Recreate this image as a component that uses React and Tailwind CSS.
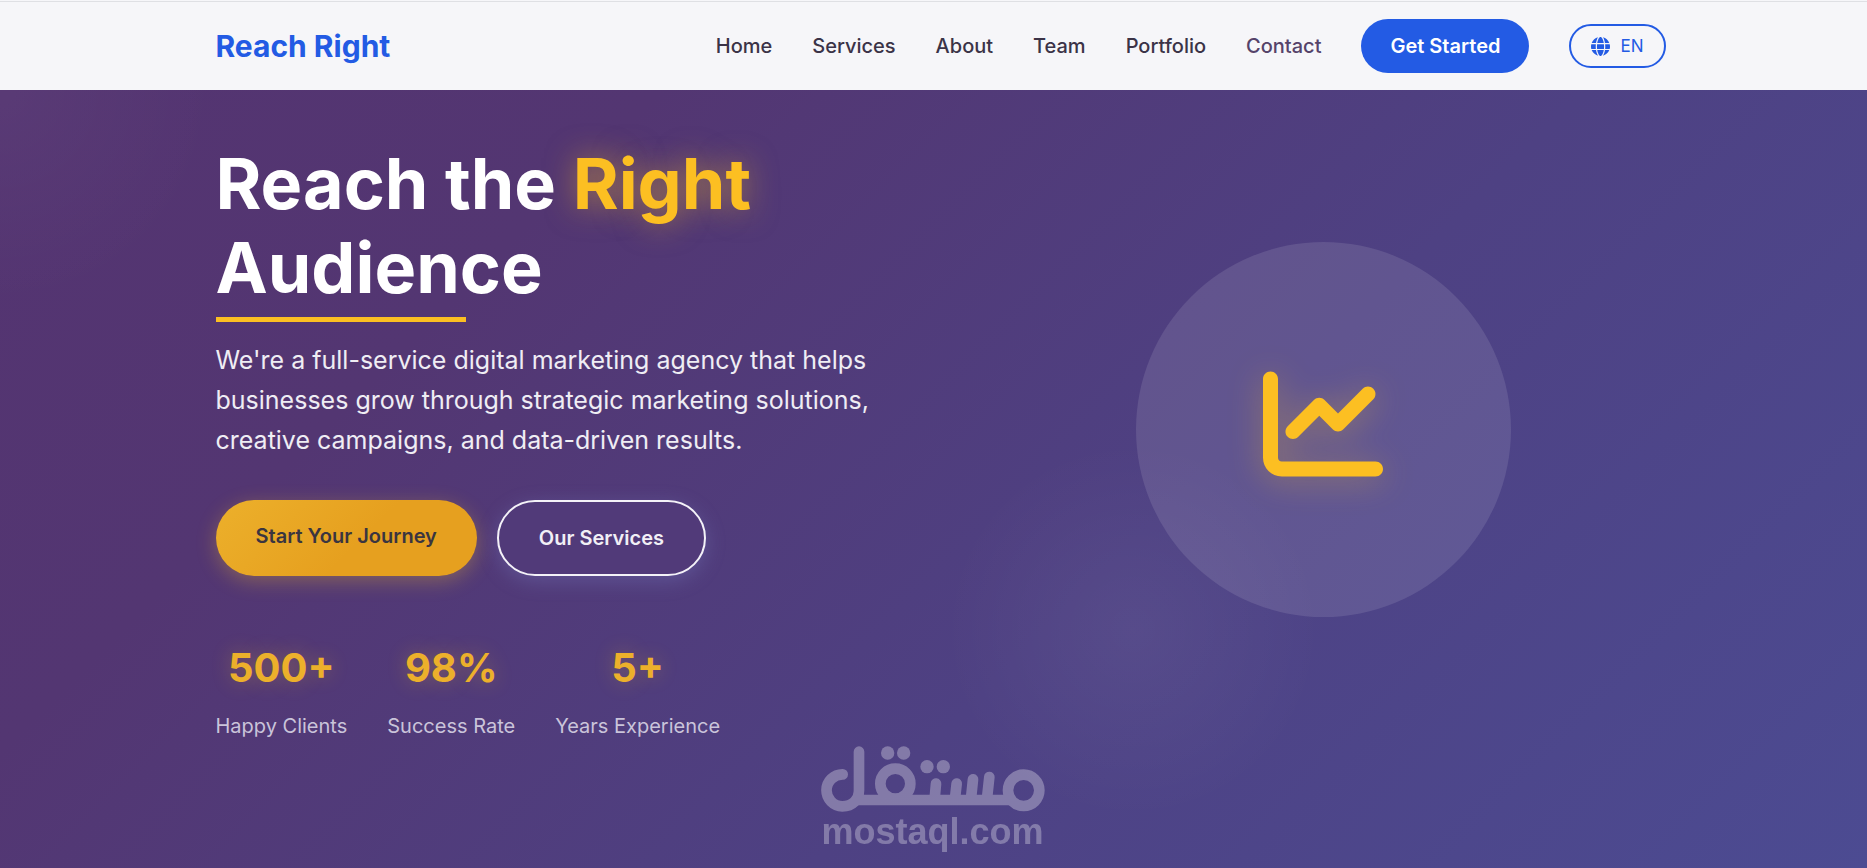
import { FaChartLine, FaGlobe } from 'react-icons/fa6';

const links = ['Home', 'Services', 'About', 'Team', 'Portfolio'];

const stats = [
  { value: '500+', label: 'Happy Clients' },
  { value: '98%', label: 'Success Rate' },
  { value: '5+', label: 'Years Experience' },
];

function Navbar() {
  return (
    <header className="h-[90px] shrink-0 bg-[#f6f6f9] pt-px flex flex-col">
      <div className="h-px shrink-0 bg-[#dfe0e4]" />
      <div className="grow pl-[14px]">
        <div className="h-full max-w-[1500px] mx-auto px-[25px] flex items-center justify-between">
          <a href="#home" className="text-[30px] leading-[36px] font-bold text-[#235be4]">
            Reach Right
          </a>
          <nav className="flex items-center gap-10 text-[20px] leading-[32px] font-medium text-[#3b3347]">
            {links.map((link) => (
              <a key={link} href={`#${link.toLowerCase()}`}>
                {link}
              </a>
            ))}
            <a href="#contact" className="text-[#55436a]">
              Contact
            </a>
            <a
              href="#start"
              className="bg-[#235be4] text-white font-semibold rounded-full px-[29px] py-[11px]"
            >
              Get Started
            </a>
            <button
              type="button"
              className="flex items-center gap-[10px] h-11 border-2 border-[#235be4] rounded-full px-5 text-[17px] font-normal text-[#235be4]"
            >
              <FaGlobe className="size-[19px]" />
              EN
            </button>
          </nav>
        </div>
      </div>
    </header>
  );
}

function Watermark() {
  return (
    <div className="absolute bottom-4 inset-x-0 pr-[2px] flex flex-col items-center text-white opacity-30">
      <svg
        viewBox="93 54 672 198"
        className="w-[224px] h-[66px]"
        fill="none"
        stroke="currentColor"
        strokeWidth="32"
        strokeLinecap="round"
      >
        <path d="M158 139 A48 48 0 1 0 157 235 C188 235 207 214 207 187 V71" />
        <path d="M190 216 H665" strokeLinecap="butt" />
        <circle cx="316" cy="167" r="45" />
        <circle cx="701" cy="187" r="47" />
        <path d="M434 212 L438 167 M495 212 L500 167 M543 212 L549 154 M591 212 L598 147" />
        <g fill="currentColor" stroke="none">
          <circle cx="293" cy="75" r="20" />
          <circle cx="341" cy="75" r="20" />
          <circle cx="411" cy="116" r="20" />
          <circle cx="460" cy="116" r="20" />
        </g>
      </svg>
      <span className="text-[36px] leading-[40px] font-bold font-['Liberation_Sans',sans-serif]">
        mostaql.com
      </span>
    </div>
  );
}

function Hero() {
  return (
    <main className="relative grow overflow-hidden pl-[14px] bg-[radial-gradient(circle_at_1133px_540px,rgba(255,255,255,0.05),transparent_190px),radial-gradient(circle_at_0px_0px,rgba(255,255,255,0.03),transparent_220px),linear-gradient(135deg,#543471_0%,#533672_25%,#4e4183_60%,#4c4b92_100%)]">
      <div className="max-w-[1500px] mx-auto px-[25px] pt-[52px] grid grid-cols-2 gap-20">
        <div>
          <h1 className="text-[70px] leading-[84px] font-bold text-white">
            Reach the{' '}
            <span className="text-[#fcbf22] [text-shadow:0_0_30px_rgba(251,191,36,0.5)]">Right</span>
            <br />
            Audience
          </h1>
          <div className="mt-[7px] w-[250px] h-[5px] bg-[#fcbf22]" />
          <p className="mt-[18px] text-[25px] leading-[40px] text-[#efedf4]">
            We're a full-service digital marketing agency that helps businesses grow through
            strategic marketing solutions, creative campaigns, and data-driven results.
          </p>
          <div className="mt-10 flex gap-5 text-[20px] leading-[32px] font-semibold">
            <a
              href="#start"
              className="rounded-full px-10 py-5 text-[#3a3540] bg-[linear-gradient(135deg,#ecb02b,#e6a01f_55%)] shadow-[0_5px_20px_rgba(251,191,36,0.3)]"
            >
              Start Your Journey
            </a>
            <a
              href="#services"
              className="rounded-full px-10 py-5 border-2 border-[#f4f2f8] text-[#f1eff6] bg-[#513a79] shadow-[0_5px_20px_rgba(130,140,210,0.3)]"
            >
              Our Services
            </a>
          </div>
          <div className="mt-[60px] flex gap-10 text-center">
            {stats.map((stat) => (
              <div key={stat.label}>
                <div className="text-[40px] leading-[64px] font-bold text-[#ecb02b] [text-shadow:0_0_20px_rgba(251,191,36,0.3)]">
                  {stat.value}
                </div>
                <div className="mt-[10px] text-[20px] leading-[32px] text-[#cac4da]">{stat.label}</div>
              </div>
            ))}
          </div>
        </div>
        <div className="flex justify-center pt-[100px]">
          <div className="size-[375px] rounded-full bg-white/11 flex items-center justify-center pb-3">
            <FaChartLine className="size-[120px] text-[#fcbf22] drop-shadow-[0_4px_16px_rgba(251,191,36,0.35)]" />
          </div>
        </div>
      </div>
      <Watermark />
    </main>
  );
}

export default function App() {
  return (
    <div className="min-h-screen flex flex-col font-['Inter',sans-serif]">
      <Navbar />
      <Hero />
    </div>
  );
}
